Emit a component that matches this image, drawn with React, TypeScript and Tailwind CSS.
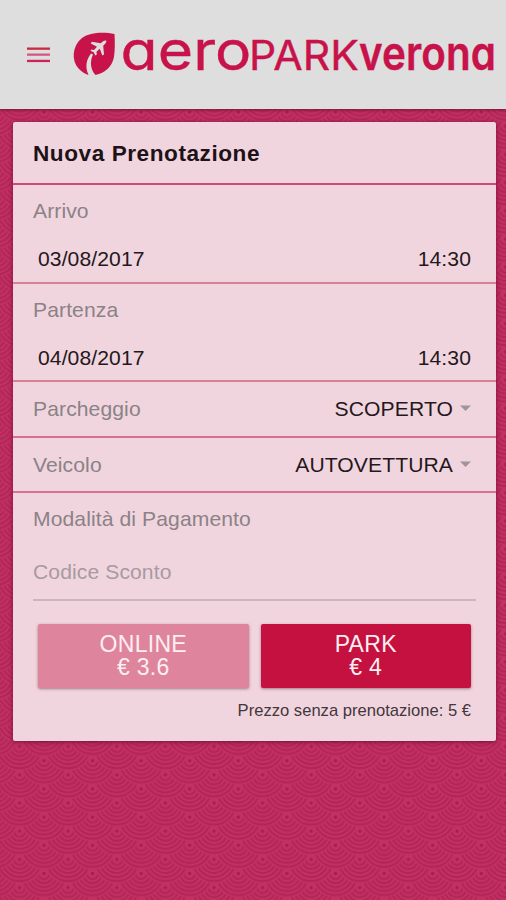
import React from 'react';

const TILE_W = 48.6;
const TILE_H = 28.2;
const RINGS = [21.6, 17.6, 13.6, 9.6, 5.6];

// Lower rows first so that the upper scales overlap them
const SCALES = [3, 2, 1, 0, -1, -2].flatMap((row) =>
  [-1, 0, 1, 2].map((col) => ({
    x: col * TILE_W + (row % 2 === 0 ? 0 : TILE_W / 2),
    y: (row * TILE_H) / 2,
  }))
);

function Waves() {
  return (
    <svg className="absolute inset-0 -z-10 h-full w-full" aria-hidden="true">
      <defs>
        <pattern id="waves" x="19.6" y="774.8" width={TILE_W} height={TILE_H} patternUnits="userSpaceOnUse">
          <rect width={TILE_W} height={TILE_H} fill="#c43063" />
          {SCALES.map((s, i) => (
            <g key={i} transform={`translate(${s.x} ${s.y})`}>
              <circle r="24.3" fill="#c43063" />
              {RINGS.map((r) => (
                <circle key={r} r={r} fill="none" stroke="#b02656" strokeWidth="2" />
              ))}
              <circle r="1.7" fill="#a61f4e" />
            </g>
          ))}
        </pattern>
      </defs>
      <rect width="100%" height="100%" fill="url(#waves)" />
    </svg>
  );
}

function MenuIcon() {
  return (
    <svg width="23" height="16" viewBox="0 0 23 16" className="shrink-0">
      <rect y="0.500" width="23" height="2.300" fill="#c92a3c" />
      <rect y="6.500" width="23" height="2.300" fill="#cf5a80" />
      <rect y="12.800" width="23" height="2.300" fill="#cb2457" />
    </svg>
  );
}

function Logo() {
  return (
    <svg width="426" height="60" viewBox="72 25 426 60" className="shrink-0 overflow-visible fill-[#c8124a]">
      <path d="M114.500 34 C104 32 90 32 82 38 C72 46 71 61 79 69 C82 72 85 74 88.500 75 C85 67 86 60 91 53.500 L93 54.500 C90 61 90 69 95.500 75 C105 73 112 67 114 57 C115 50 115 42 114.500 34 Z" />
      <path
        className="fill-[#dedede]"
        d="M106.300 40.700 C104.500 40.200 102.300 41.800 100.800 43.300 L91.800 41.800 L90.800 43.500 L97 46.800 L94 50 L91.500 49.500 L90.500 50.800 L93.700 52.200 L95.300 55.500 L96.800 54.500 L96.500 51.800 L99.800 48.800 L102.300 55.500 L104 54.500 L103.200 45.700 C104.800 44.200 106.800 42.200 106.300 40.700 Z"
      />
      <g
        className="stroke-[#c8124a]"
        strokeWidth="0.4"
        style={{ fontFamily: 'Inter, sans-serif', fontFeatureSettings: '"cv11"' }}
      >
        <text x="120.500" y="70" fontSize="54" fontWeight="400" textLength="131" lengthAdjust="spacingAndGlyphs">aero</text>
        <text x="249" y="70" fontSize="41" fontWeight="400" textLength="110" lengthAdjust="spacingAndGlyphs">PARK</text>
        <text x="359" y="70" fontSize="47" fontWeight="600" textLength="137" lengthAdjust="spacingAndGlyphs">verona</text>
      </g>
    </svg>
  );
}

function DateRow({ label, date, time }: { label: string; date: string; time: string }) {
  return (
    <div className="h-[98.5px] border-b-2 border-[#d97f98] pl-5 pr-[25px] pt-[14px]">
      <div className="h-6 leading-6 text-[#8a8287]">{label}</div>
      <div className="mt-6 flex justify-between pl-[5px] leading-6 text-[#24181d]">
        <span>{date}</span>
        <span>{time}</span>
      </div>
    </div>
  );
}

function SelectRow({ label, value }: { label: string; value: string }) {
  return (
    <div className="flex h-[55.5px] items-center justify-between border-b-2 border-[#d8718f] pl-5 pr-[25px] pt-px">
      <span className="text-[#8a8287]">{label}</span>
      <span className="flex items-center gap-[7px] text-[#24181d]">
        {value}
        <svg width="11" height="6" viewBox="0 0 11 6" className="mb-0.5 fill-[#a0949b]">
          <path d="M0 0.500 H11 L5.500 6 Z" />
        </svg>
      </span>
    </div>
  );
}

export default function App() {
  return (
    <div className="relative isolate h-[900px] w-[506px] overflow-hidden font-['Liberation_Sans',Arial,sans-serif] text-[21.1px] tracking-[0.1px]">
      <Waves />
      <header className="flex h-[109px] items-center gap-[22px] bg-[#dedede] pl-[27px] shadow-[0_1px_3px_#7a0f38]">
        <MenuIcon />
        <Logo />
      </header>

      <main className="ml-[13px] mt-[13px] h-[618.5px] w-[483px] rounded-[2px] bg-[#f1d5de] shadow-[0_1px_4px_#7a0f38]">
        <h1 className="h-[63px] border-b-2 border-[#cf4a73] pl-5 text-[22.6px] font-bold leading-[63px] tracking-[0.55px] text-[#1c1217]">
          Nuova Prenotazione
        </h1>
        <DateRow label="Arrivo" date="03/08/2017" time="14:30" />
        <DateRow label="Partenza" date="04/08/2017" time="14:30" />
        <SelectRow label="Parcheggio" value="SCOPERTO" />
        <SelectRow label="Veicolo" value="AUTOVETTURA" />

        <div className="px-5 pt-[14px]">
          <div className="h-6 leading-6 text-[#8a8287]">Modalità di Pagamento</div>
          <div className="mt-[18px] h-[52px] border-b-2 border-[#cdb4be] pt-[11px] leading-6">
            <input
              type="text"
              placeholder="Codice Sconto"
              className="block h-6 w-full bg-transparent outline-none placeholder:text-[#a79aa2]"
            />
          </div>
          <div className="mt-[23px] flex gap-3 px-[5px] text-[23px] leading-[23px] tracking-[0.3px]">
            <button className="h-16 flex-1 rounded-[2px] bg-[#de859d] text-[#fdeef2] shadow-[0_1px_3px_rgba(90,30,50,0.5)]">
              ONLINE<br />€ 3.6
            </button>
            <button className="h-16 flex-1 rounded-[2px] bg-[#c5113f] text-[#fdeef2] shadow-[0_1px_3px_rgba(90,30,50,0.5)]">
              PARK<br />€ 4
            </button>
          </div>
          <p className="mt-[13px] pr-[5px] text-right text-[16.6px] leading-5 tracking-normal text-[#44363c]">
            Prezzo senza prenotazione: 5 €
          </p>
        </div>
      </main>
    </div>
  );
}
